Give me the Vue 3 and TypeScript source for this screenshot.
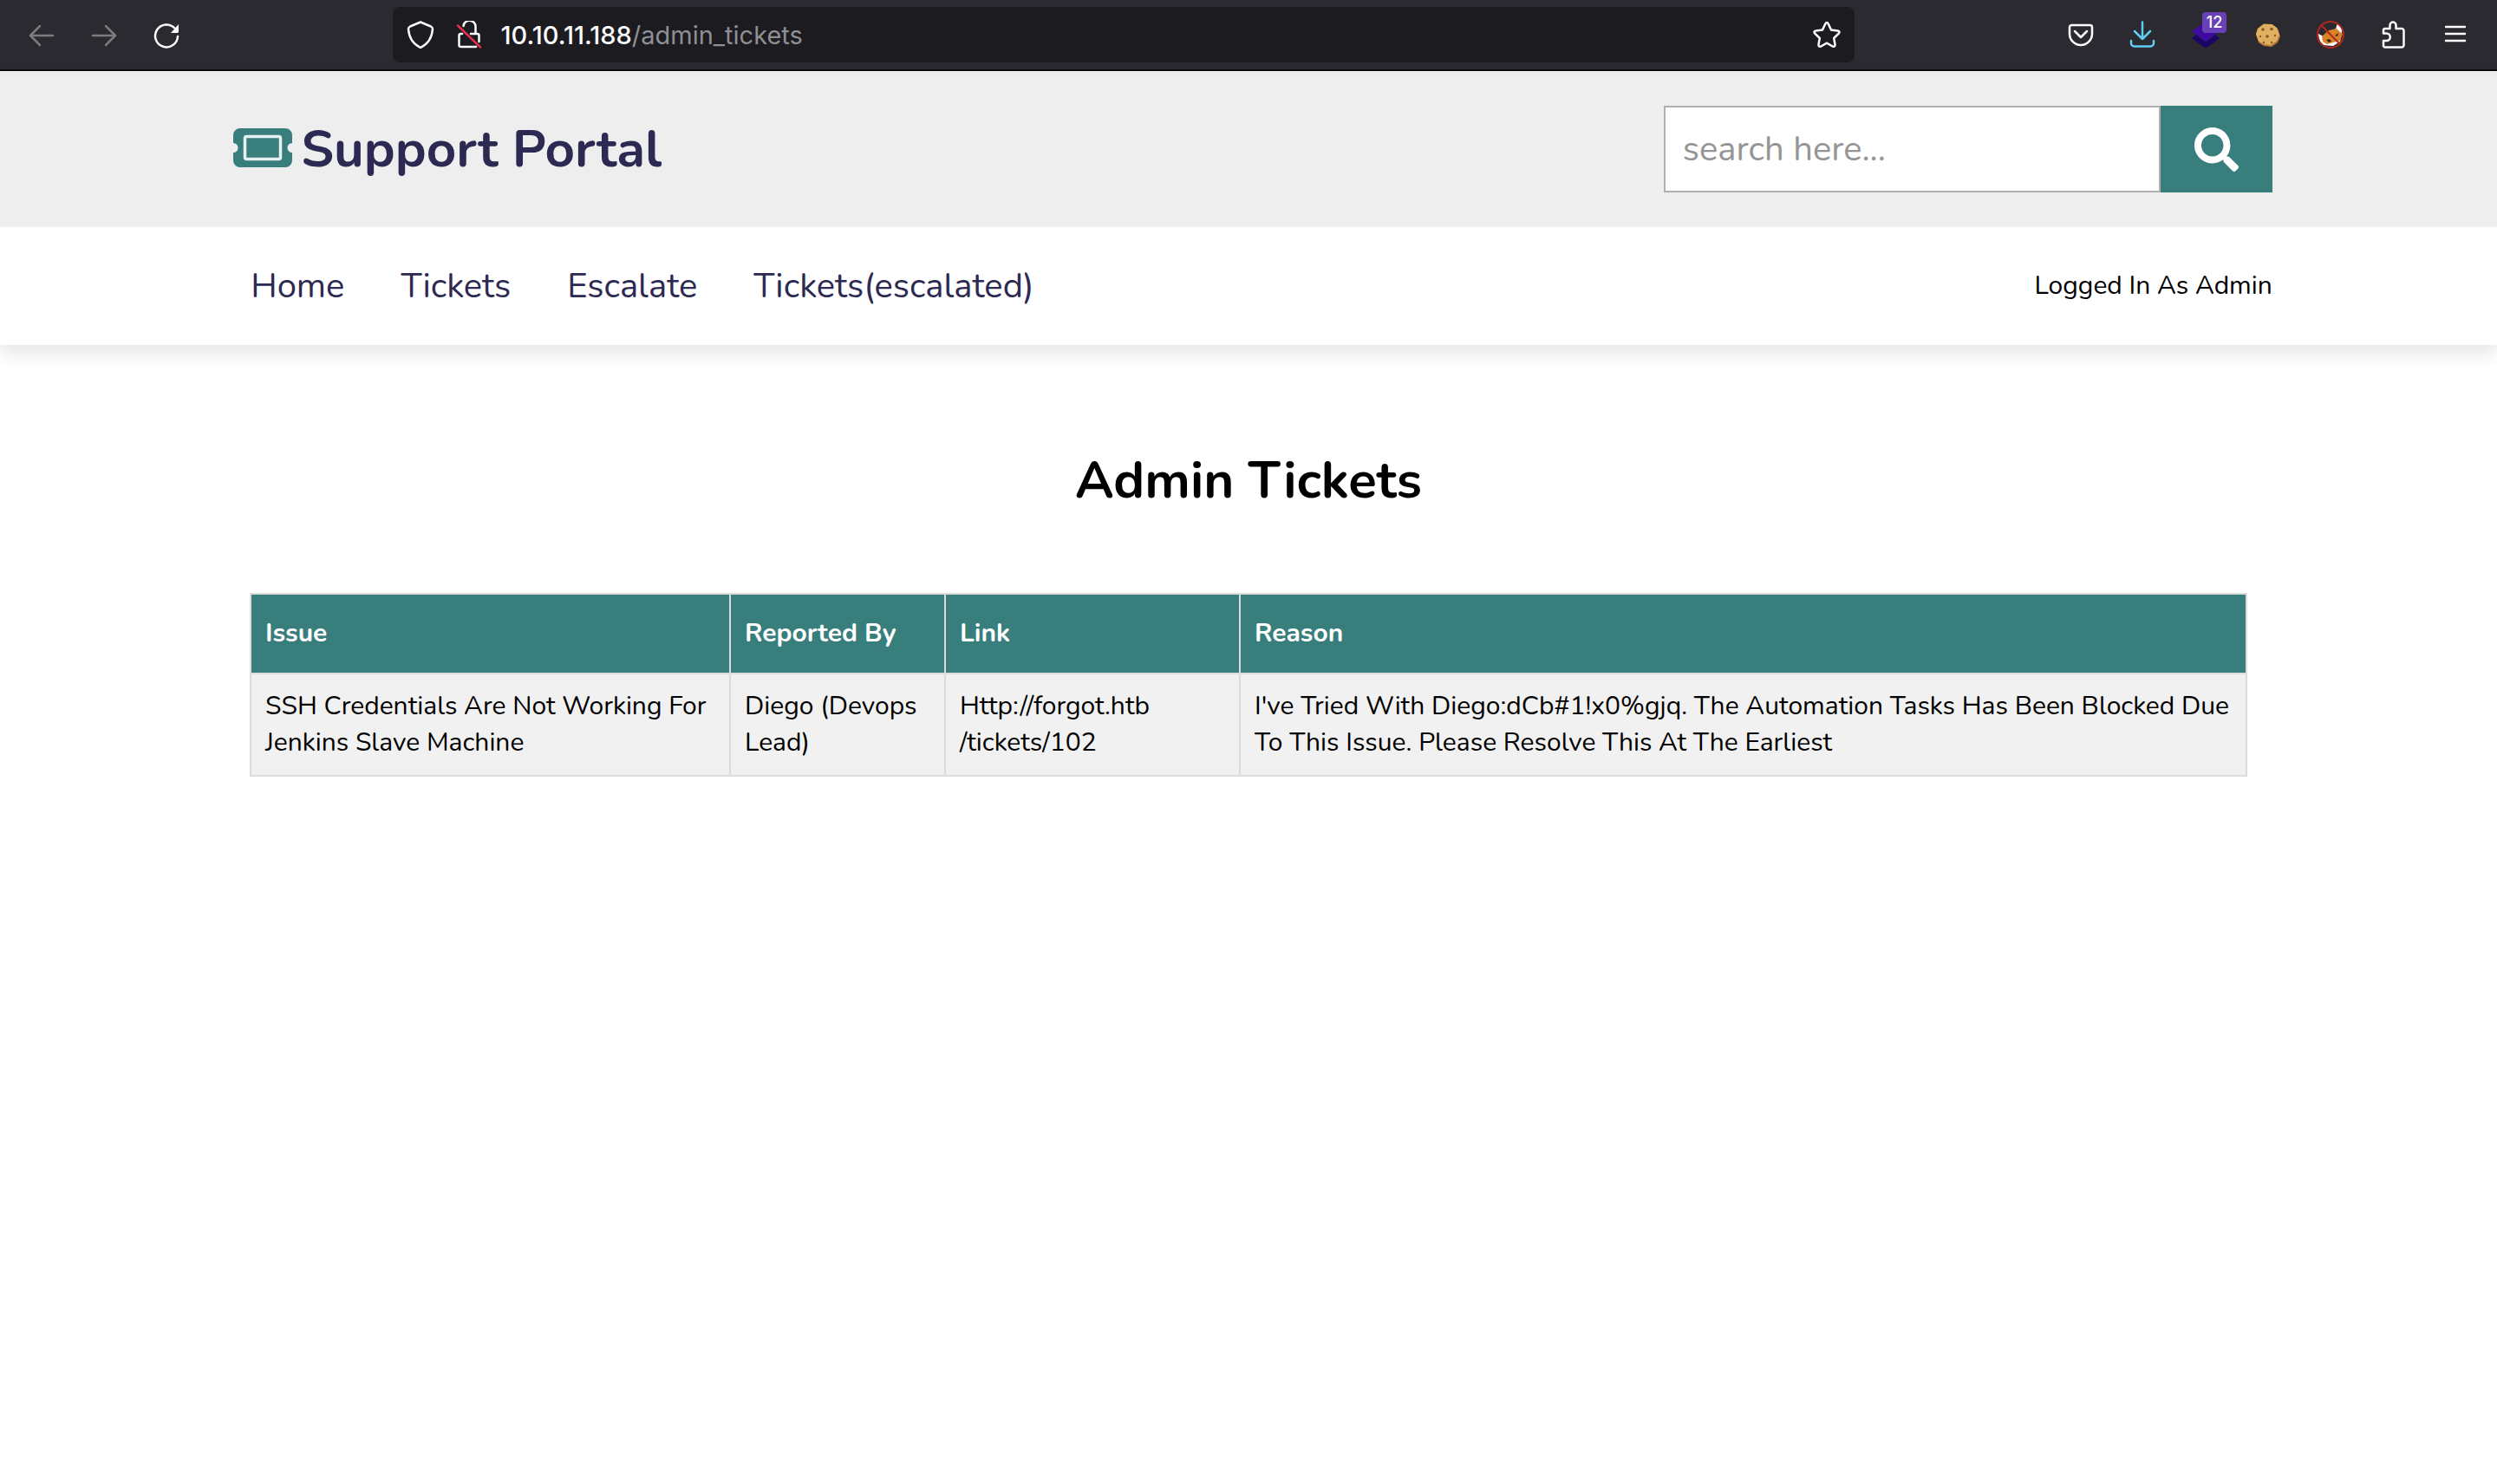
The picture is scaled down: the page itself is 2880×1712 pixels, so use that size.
<script setup lang="ts">
import { ref } from 'vue'

interface Ticket {
  issue: string
  reportedBy: string
  link: string[]
  reason: string
}

const query = ref('')

const links: string[] = ['Home', 'Tickets', 'Escalate', 'Tickets(escalated)']

const tickets: Ticket[] = [
  {
    issue: 'SSH Credentials Are Not Working For Jenkins Slave Machine',
    reportedBy: 'Diego (Devops Lead)',
    link: ['Http://forgot.htb', '/tickets/102'],
    reason:
      "I've Tried With Diego:dCb#1!x0%gjq. The Automation Tasks Has Been Blocked Due To This Issue. Please Resolve This At The Earliest",
  },
]
</script>

<template>
  <div class="browser">
    <div class="toolbar">
      <div class="tools">
        <button class="tool dim" type="button" aria-label="Back">
          <svg viewBox="0 0 32 32"><path d="M29 17H3M14 6 3 17l11 11" /></svg>
        </button>
        <button class="tool dim" type="button" aria-label="Forward">
          <svg viewBox="0 0 32 32"><path d="M3 17h26M18 6l11 11-11 11" /></svg>
        </button>
        <button class="tool" type="button" aria-label="Reload">
          <svg viewBox="0 0 32 32">
            <path d="M29 18A13 13 0 1 1 25.500 8.500" />
            <path class="fill" d="M30 4v8.500a1.500 1.500 0 0 1-1.500 1.500H21z" />
          </svg>
        </button>
      </div>
      <div class="address">
        <svg class="address-icon" viewBox="0 0 32 32">
          <path d="M16 1.500 28 6.500q2 1 2 3-1 15-14 21.500Q3 24.500 2 9.500q0-2 2-3z" />
        </svg>
        <svg class="address-icon" viewBox="0 0 32 32">
          <path d="M9.500 6a7 7 0 0 1 14 1.500V15h2a2 2 0 0 1 2 2v7M8 15H6.500a2 2 0 0 0-2 2v11a2 2 0 0 0 2 2H24M18 15h5.500" />
          <path class="slash" d="m3 5.500 26 25" />
        </svg>
        <span class="url"><span class="host">10.10.11.188</span>/admin_tickets</span>
        <svg class="address-icon star" viewBox="0 0 32 32">
          <path d="M14.300 3.500q1.700-3 3.400 0l3.300 7 7.700 1q3 .7 1 3.200l-5.500 5.300 1.300 7.500q0 3.200-2.800 2L16 25.700l-6.700 3.800q-2.800 1.200-2.800-2L7.800 20l-5.500-5.300q-2-2.500 1-3.200l7.700-1z" />
        </svg>
      </div>
      <div class="tools">
        <button class="tool" type="button" aria-label="Save to Pocket">
          <svg viewBox="0 0 32 32">
            <path d="M5.500 5h21A2.500 2.500 0 0 1 29 7.500V15a13 13 0 0 1-26 0V7.500A2.500 2.500 0 0 1 5.500 5z" />
            <path d="m9 12 7 7 7-7" />
          </svg>
        </button>
        <button class="tool download" type="button" aria-label="Downloads">
          <svg viewBox="0 0 32 32">
            <path d="M15 1.500V21M6 12l9 9 9-9M2 23v3a3.500 3.500 0 0 0 3.500 3.500h19A3.500 3.500 0 0 0 28 26v-3" />
          </svg>
        </button>
        <button class="tool" type="button" aria-label="Wappalyzer">
          <svg class="solid" viewBox="0 0 32 32">
            <path fill="#1b0563" d="M0 20 5 16l11 8 11-8 5 4-16 12z" />
            <path fill="#3f0aa0" d="M16 1 32 12 16 24 0 12z" />
          </svg>
          <span class="badge">12</span>
        </button>
        <button class="tool" type="button" aria-label="Cookie editor">
          <svg class="solid" viewBox="0 0 32 32">
            <path fill="#b97a35" d="M11 4 21 4l6 5 3 9-3 7-7 5-9-1-6-4-3-9 2-7z" />
            <path fill="#e0b060" d="M11 3.500 20 4l6 4 3 8-3 7-7 5-8-1-6-4-3-8 2-6z" />
            <g fill="#8a5528">
              <circle cx="10" cy="10" r="1.800" /><circle cx="20" cy="9.500" r="1.800" />
              <circle cx="15" cy="18" r="1.800" /><circle cx="7" cy="18" r="1.200" />
              <circle cx="24" cy="17" r="1.200" /><circle cx="11" cy="25" r="1.200" />
              <circle cx="20" cy="25" r="1.200" />
            </g>
          </svg>
        </button>
        <button class="tool" type="button" aria-label="FoxyProxy, disabled">
          <svg class="solid" viewBox="0 0 32 32">
            <path fill="#fff" d="M2 15 8 18 22 9l2-6q6 5 5 10l-2 11-8 5-12-1Q2 22 2 15z" />
            <path fill="#d98328" d="M6 18 14 11l9-2 4 4 3 2-3 8-8 2-7 2-5-3z" />
            <path fill="#3a2415" d="m11 22 4-1 2 3-3 1zM21 17l4-3-1 4z" />
            <g fill="none" stroke="#b3261e" stroke-width="2">
              <circle cx="16" cy="16" r="15" /><path d="m5 5 22 22" />
            </g>
          </svg>
        </button>
        <button class="tool" type="button" aria-label="Extensions">
          <svg viewBox="0 0 32 32">
            <path d="M5 14.500V11a2 2 0 0 1 2-2h5.500V5a3.500 3.500 0 0 1 7 0v4H26a2.500 2.500 0 0 1 2.500 2.500V28a2.500 2.500 0 0 1-2.500 2.500H7A2 2 0 0 1 5 28v-5h3.500a4 4 0 0 0 0-8.500z" />
          </svg>
        </button>
        <button class="tool" type="button" aria-label="Menu">
          <svg viewBox="0 0 32 32"><path d="M5 7h22M5 15h22M5 23h22" /></svg>
        </button>
      </div>
    </div>

    <header class="header">
      <div class="masthead">
        <a class="logo" href="#">
          <svg class="ticket" viewBox="0 0 68 45">
            <path fill="#387e7d" d="M8 0h52a8 8 0 0 1 8 8v9a5.500 5.500 0 0 0 0 11v9a8 8 0 0 1-8 8H8a8 8 0 0 1-8-8v-9a5.500 5.500 0 0 0 0-11V8a8 8 0 0 1 8-8z" />
            <rect x="13.500" y="9.500" width="41" height="26" rx="2" fill="none" stroke="#e6f0f0" stroke-width="3.500" />
          </svg>
          Support Portal
        </a>
        <form class="search" @submit.prevent>
          <input v-model="query" type="search" placeholder="search here..." aria-label="Search" />
          <button type="submit" aria-label="Search">
            <svg viewBox="0 0 512 512">
              <path d="M505 442.700 405.300 343c-4.500-4.500-10.600-7-17-7H372c27.600-35.300 44-79.700 44-128C416 93.100 322.900 0 208 0S0 93.100 0 208s93.100 208 208 208c48.300 0 92.700-16.400 128-44v16.300c0 6.400 2.500 12.500 7 17l99.700 99.700c9.400 9.400 24.600 9.400 33.900 0l28.300-28.300c9.400-9.400 9.400-24.600.1-34zM208 336c-70.700 0-128-57.200-128-128 0-70.700 57.200-128 128-128 70.700 0 128 57.200 128 128 0 70.700-57.200 128-128 128z" />
            </svg>
          </button>
        </form>
      </div>
      <div class="navbar">
        <nav>
          <a v-for="link in links" :key="link" href="#">{{ link }}</a>
        </nav>
        <span class="user">Logged In As Admin</span>
      </div>
    </header>

    <main>
      <h1>Admin Tickets</h1>
      <table>
        <colgroup>
          <col class="col-issue" />
          <col class="col-reporter" />
          <col class="col-link" />
          <col />
        </colgroup>
        <thead>
          <tr>
            <th scope="col">Issue</th>
            <th scope="col">Reported By</th>
            <th scope="col">Link</th>
            <th scope="col">Reason</th>
          </tr>
        </thead>
        <tbody>
          <tr v-for="ticket in tickets" :key="ticket.issue">
            <td>{{ ticket.issue }}</td>
            <td>{{ ticket.reportedBy }}</td>
            <td>{{ ticket.link[0] }}<br />{{ ticket.link[1] }}</td>
            <td>{{ ticket.reason }}</td>
          </tr>
        </tbody>
      </table>
    </main>
  </div>
</template>

<style>
body {
  background: #fff;
}
</style>

<style scoped>
* {
  box-sizing: border-box;
}

.browser {
  color: #000;
  font-family: Nunito, Lato, sans-serif;
  font-size: 30px;
  line-height: 42px;
}

button {
  border: 0;
  padding: 0;
  font: inherit;
  cursor: pointer;
}

a {
  color: #2c2a52;
  text-decoration: none;
}

.toolbar {
  display: flex;
  align-items: center;
  justify-content: space-between;
  padding: 8px 12px;
  border-bottom: 2px solid #0c0c0d;
  background: #2b2a30;
}

.tools {
  display: flex;
  align-items: center;
}

.tool {
  position: relative;
  display: flex;
  align-items: center;
  justify-content: center;
  width: 72px;
  height: 64px;
  background: none;
  color: #fbfbfe;
}

.tool svg,
.address-icon {
  width: 32px;
  height: 32px;
  fill: none;
  stroke: currentColor;
  stroke-width: 2.5;
  stroke-linecap: round;
  stroke-linejoin: round;
}

.tool svg.solid {
  stroke: none;
}

.tool .fill {
  fill: currentColor;
  stroke: none;
}

.dim {
  color: #7c7b80;
}

.download {
  color: #61cdee;
}

.badge {
  position: absolute;
  top: 6px;
  right: 12px;
  width: 28px;
  border-radius: 4px;
  background: #6741b5;
  color: #fff;
  font: 500 18px/24px Inter, sans-serif;
  text-align: center;
}

.address {
  display: flex;
  align-items: center;
  gap: 24px;
  width: 59%;
  height: 64px;
  padding: 0 16px;
  border-radius: 8px;
  background: #1c1b20;
  color: #fbfbfe;
}

.address-icon {
  flex: none;
}

.slash {
  stroke: #e0304f;
}

.star {
  margin-left: auto;
}

.url {
  margin-left: -4px;
  padding-top: 2px;
  color: #8f8f94;
  font-family: Inter, sans-serif;
  font-size: 29px;
}

.host {
  color: #fbfbfe;
  font-weight: 500;
}

.masthead,
.navbar {
  display: flex;
  align-items: center;
  justify-content: space-between;
  padding: 0 9%;
}

.masthead {
  height: 180px;
  background: #eee;
}

.logo {
  display: flex;
  align-items: center;
  gap: 10px;
  padding-left: 10px;
  font-size: 60px;
  font-weight: 700;
  line-height: 84px;
}

.ticket {
  width: 68px;
  height: 45px;
  margin-bottom: 4px;
}

.search {
  display: flex;
  height: 100px;
}

.search input {
  width: 573px;
  padding: 0 20px;
  border: 2px solid #b0b0b0;
  border-radius: 0;
  outline: 0;
  background: #fff;
  font: inherit;
  font-size: 40px;
}

.search input::placeholder {
  color: #959595;
}

.search button {
  display: flex;
  align-items: center;
  justify-content: center;
  width: 129px;
  background: #387e7d;
}

.search svg {
  width: 51px;
  height: 51px;
  fill: #fff;
}

.header {
  box-shadow: 0 10px 20px rgba(0, 0, 0, 0.1);
}

.navbar {
  height: 136px;
  background: #fff;
}

nav {
  display: flex;
  gap: 65px;
  padding-left: 30px;
  font-size: 40px;
}

main {
  padding: 114px 10%;
}

h1 {
  margin: 0 0 88px;
  font-size: 60px;
  font-weight: 700;
  line-height: 84px;
  text-align: center;
}

table {
  width: 100%;
  border-collapse: collapse;
  table-layout: fixed;
}

.col-issue {
  width: 553px;
}

.col-reporter {
  width: 248px;
}

.col-link {
  width: 340px;
}

th,
td {
  padding: 16px;
  border: 2px solid #dcdcdc;
  text-align: left;
  vertical-align: top;
}

th {
  padding: 24px 16px;
  background: #387e7d;
  color: #fff;
  font-weight: 700;
}

td {
  background: #f1f1f1;
}
</style>
